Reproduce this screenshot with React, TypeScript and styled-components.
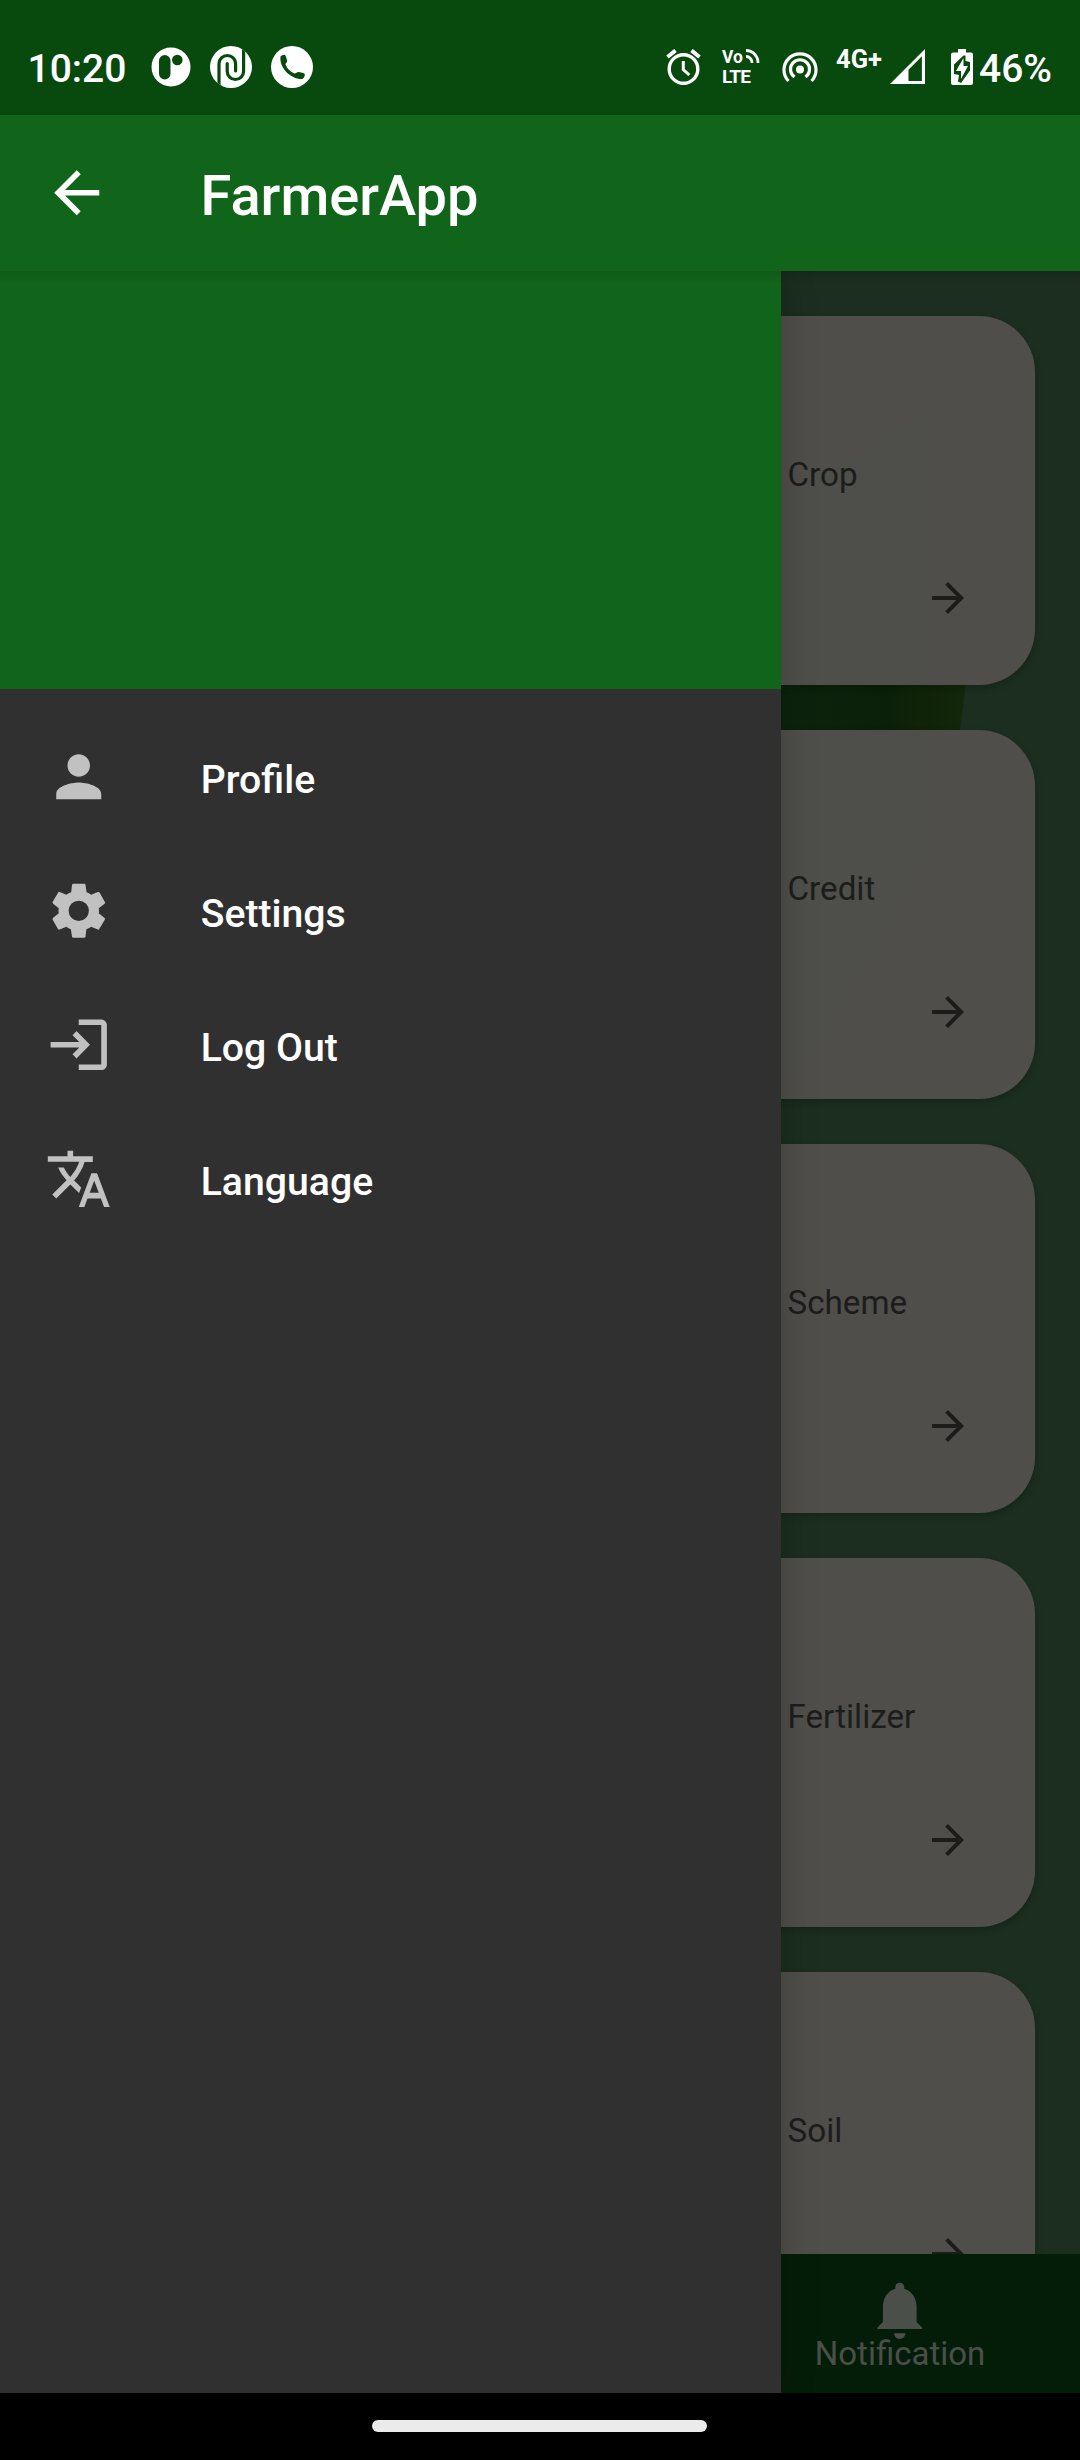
import React from 'react';
import styled, { createGlobalStyle } from 'styled-components';

const Global = createGlobalStyle`
  * { box-sizing: border-box; }
  body { margin: 0; background: #000; }
`;

const Screen = styled.div`
  width: 1080px;
  height: 2460px;
  display: flex;
  flex-direction: column;
  overflow: hidden;
  font-family: Roboto, 'Noto Sans', sans-serif;
  background: #000;
`;

const StatusBar = styled.header`
  height: 115px;
  flex: none;
  display: flex;
  align-items: center;
  padding: 18px 29px 0 27.5px;
  background: #08490e;
  color: #fff;
`;

const Clock = styled.span`
  width: 122px;
  font-size: 39px;
  font-weight: 500;
  line-height: 46px;
  padding-top: 4px;
`;

const Notifications = styled.div`
  display: flex;
  align-items: center;
  gap: 18.75px;
  flex: 1;
`;

const Glyph = styled.svg<{ $w: number; $h: number; $ml?: number }>`
  display: block;
  flex: none;
  width: ${(p) => p.$w}px;
  height: ${(p) => p.$h}px;
  margin-left: ${(p) => p.$ml ?? 0}px;
`;

const SystemIcons = styled.div`
  display: flex;
  align-items: center;
`;

const VoLte = styled.div`
  width: 42px;
  height: 38px;
  margin-left: 21px;
  display: flex;
  flex-direction: column;
`;

const VoRow = styled.div`
  display: flex;
  height: 19px;
  font-size: 17.5px;
  line-height: 18px;
  font-weight: 700;
`;

const LteRow = styled.span`
  font-size: 19px;
  line-height: 19px;
  font-weight: 700;
  letter-spacing: -0.8px;
`;

const Network = styled.span`
  align-self: flex-start;
  margin-left: 18px;
  margin-top: 2px;
  width: 49px;
  font-size: 25.5px;
  line-height: 30px;
  font-weight: 700;
  white-space: nowrap;
`;

const Battery = styled.span`
  width: 72px;
  margin-left: 6px;
  font-size: 39px;
  line-height: 46px;
  padding-top: 4px;
  font-weight: 500;
  white-space: nowrap;
`;

const AppBar = styled.div`
  height: 156px;
  flex: none;
  display: flex;
  align-items: center;
  padding-left: 42.5px;
  background: #11651a;
  color: #fff;
`;

const Title = styled.h1`
  margin: 6px 0 0 90.5px;
  font-size: 56px;
  line-height: 66px;
  font-weight: 500;
`;

const Body = styled.div`
  height: 2122px;
  flex: none;
  position: relative;
  overflow: hidden;
`;

const Home = styled.main`
  height: 100%;
  display: flex;
  flex-direction: column;
`;

const Feed = styled.div`
  height: 1983px;
  flex: none;
  position: relative;
  overflow: hidden;
  display: flex;
  flex-direction: column;
  gap: 45px;
  padding: 45px;
  background: #1b2e1f;
`;

const Backdrop = styled.svg`
  position: absolute;
  top: 0;
  left: 0;
  width: 1080px;
  height: 1983px;
`;

const Card = styled.article`
  position: relative;
  height: 369px;
  flex: none;
  border-radius: 56px;
  display: flex;
  flex-direction: column;
  background: rgba(83, 81, 79, 0.94);
  color: #1c1d1b;
  box-shadow: 0 3px 7px rgba(0, 0, 0, 0.2);
`;

const CardLabel = styled.div`
  padding: 139px 0 0 742.5px;
  font-size: 33.2px;
  line-height: 40px;
`;

const CardAction = styled.div`
  display: flex;
  justify-content: flex-end;
  padding: 79px 63px 0 0;
`;

const BottomNav = styled.nav`
  flex: 1;
  display: flex;
  justify-content: flex-end;
  background: #041d08;
  color: #4a4f49;
`;

const NavTab = styled.div`
  width: 360px;
  display: flex;
  flex-direction: column;
  align-items: center;
  padding-top: 23px;
`;

const NavLabel = styled.span`
  font-size: 33px;
  line-height: 40px;
  margin-top: -10.5px;
`;

const Drawer = styled.aside`
  position: absolute;
  inset: 0 auto 0 0;
  width: 781px;
  background: #303030;
  box-shadow: 0 0 34px rgba(0, 0, 0, 0.2);
`;

const DrawerHeader = styled.div`
  height: 418px;
  background: #11651a;
`;

const Menu = styled.ul`
  list-style: none;
  margin: 0;
  padding: 21px 0 0;
`;

const MenuItem = styled.li`
  height: 134px;
  display: flex;
  align-items: center;
  padding-left: 44.7px;
  color: #c1c1c1;
`;

const MenuLabel = styled.span`
  margin: 6px 0 0 88.5px;
  font-size: 39.2px;
  line-height: 46px;
  font-weight: 500;
  color: #fff;
`;

const BarShadow = styled.div`
  position: absolute;
  inset: 0 0 auto 0;
  height: 13px;
  background: linear-gradient(rgba(0, 0, 0, 0.11), rgba(0, 0, 0, 0));
`;

const GestureBar = styled.footer`
  flex: 1;
  display: flex;
  justify-content: center;
  padding: 27px 1px 0 0;
`;

const Pill = styled.div`
  width: 335px;
  height: 12px;
  border-radius: 6px;
  background: #ebebeb;
`;

const Material = ({ d, size = 67.5 }: { d: string; size?: number }) => (
  <Glyph $w={size} $h={size} viewBox="0 0 24 24" fill="currentColor">
    <path d={d} />
  </Glyph>
);

const ARROW_BACK = 'M20 11H7.83l5.59-5.59L12 4l-8 8 8 8 1.41-1.41L7.83 13H20v-2z';
const ARROW_FORWARD = 'M12 4l-1.41 1.41L16.17 11H4v2h12.17l-5.58 5.59L12 20l8-8z';
const BELL =
  'M12 22c1.1 0 2-.9 2-2h-4c0 1.1.9 2 2 2zm6-6v-5.500c0-3.070-1.930-5.640-4.400-6.320V3.600c0-.88-.72-1.600-1.600-1.600s-1.600.72-1.600 1.600v.58C7.930 4.860 6 7.430 6 10.500V16l-2 2v.5h16v-.5l-2-2z';

const MENU = [
  {
    label: 'Profile',
    d: 'M12 12c2.21 0 4-1.79 4-4s-1.79-4-4-4-4 1.79-4 4 1.79 4 4 4zm0 2c-2.67 0-8 1.34-8 4v2h16v-2c0-2.66-5.33-4-8-4z',
  },
  {
    label: 'Settings',
    d: 'M19.1 12.900a2.800 2.800 0 0 0 .1-.9 2.800 2.800 0 0 0-.1-.9l2.100-1.600a.7.7 0 0 0 .1-.6L19.400 5.500a.7.7 0 0 0-.6-.2l-2.400 1a6.500 6.500 0 0 0-1.600-.9l-.4-2.600a.5.5 0 0 0-.5-.4h-3.800a.5.5 0 0 0-.5.4l-.3 2.600a5.600 5.600 0 0 0-1.700.9l-2.400-1a.4.4 0 0 0-.5.2l-2 3.400c-.1.2 0 .4.2.6l2 1.600a2.800 2.800 0 0 0-.1.9 2.800 2.800 0 0 0 .1.9l-2 1.600a.7.7 0 0 0-.2.6l1.900 3.400a.7.7 0 0 0 .6.2l2.400-1a6.500 6.500 0 0 0 1.600.9l.4 2.600a.5.5 0 0 0 .5.4h3.800a.5.5 0 0 0 .5-.4l.3-2.600a5.600 5.600 0 0 0 1.700-.9l2.400 1a.4.4 0 0 0 .5-.2l2-3.400c.1-.2 0-.4-.2-.6zM12 15.600A3.600 3.600 0 1 1 15.600 12 3.600 3.600 0 0 1 12 15.600z',
  },
  {
    label: 'Log Out',
    d: 'M2 11h10.2L9.8 8.6 11.2 7.1 16 12l-4.8 4.9-1.4-1.5L12.2 13H2zM12 3h8c1.1 0 2 .9 2 2v14c0 1.100-.9 2-2 2h-8v-2h8V5h-8z',
  },
  {
    label: 'Language',
    d: 'M12.87 15.07l-2.54-2.51.03-.03c1.74-1.94 2.98-4.17 3.71-6.53H17V4h-7V2H8v2H1v1.99h11.17C11.5 7.92 10.44 9.75 9 11.35 8.07 10.32 7.3 9.19 6.69 8h-2c.73 1.63 1.73 3.17 2.98 4.56l-5.09 5.02L4 19l5-5 3.11 3.11.76-2.04zM18.5 10h-2L12 22h2l1.12-3h4.75L21 22h2l-4.5-12zm-2.62 7l1.62-4.33L19.12 17h-3.24z',
  },
];

const CARDS = ['Crop', 'Credit', 'Scheme', 'Fertilizer', 'Soil'];

const LeafBackdrop = () => (
  <Backdrop viewBox="0 0 1080 1983">
    <defs>
      <linearGradient id="leaf" x1="780" y1="0" x2="975" y2="0" gradientUnits="userSpaceOnUse">
        <stop offset="0" stopColor="#0c230d" />
        <stop offset="0.55" stopColor="#0b2008" />
        <stop offset="0.9" stopColor="#12260a" />
        <stop offset="1" stopColor="#15290e" />
      </linearGradient>
    </defs>
    <path
      fill="url(#leaf)"
      d="M967 115L860 180 700 260V820H785l40-51 35-65 30-45 35-75 20-55 15-70 7-55 5-60-2-130z"
    />
  </Backdrop>
);

const NotificationIcons = () => (
  <Notifications>
    <Glyph $w={42} $h={42} viewBox="0 0 42 42">
      <circle cx="21" cy="21" r="19.5" fill="#fff" />
      <rect x="9" y="9" width="11.500" height="24.500" rx="5.75" fill="#08490e" />
      <circle cx="27.300" cy="14" r="5.300" fill="#08490e" />
    </Glyph>
    <Glyph $w={42} $h={42} viewBox="0 0 42 42">
      <clipPath id="disc">
        <circle cx="21" cy="21" r="21" />
      </clipPath>
      <g clipPath="url(#disc)" fill="none" stroke="#08490e" strokeWidth="3.2" strokeLinecap="round">
        <rect width="42" height="42" fill="#fff" stroke="none" />
        <path d="M9 44V17.800a8.300 8.300 0 0 1 16.600 0V25" />
        <path d="M33.600 -2V25.300a8.200 8.200 0 0 1-16.400 0V17.500" />
      </g>
    </Glyph>
    <Glyph $w={42} $h={42} viewBox="0 0 42 42">
      <circle cx="21" cy="21" r="21" fill="#fff" />
      <path
        d="M9.500 10.500c1-1 2.500-1.700 4-1.700 1 0 1.500 1.700 2.700 6 .2 1.500-1.700 2.500-1.700 3.700 1.500 4 5 7.500 9 9 1.500.2 2.500-1.700 4-1.500 4 .8 6.300 1 6.300 2.500 0 2-1 4-2.500 4.500C20 33.500 8 22 9.500 10.500z"
        fill="#08490e"
      />
    </Glyph>
  </Notifications>
);

const StatusIcons = () => (
  <SystemIcons>
    <Glyph $w={35} $h={36} viewBox="0 0 35 36" fill="none" stroke="#fff">
      <circle cx="17.500" cy="20" r="14.300" strokeWidth="3.400" />
      <path d="M17.300 12v8.500l6 5.500" strokeWidth="3" />
      <path d="M1.500 8l8-6.500M33.500 8l-8-6.500" strokeWidth="4" />
    </Glyph>
    <VoLte>
      <VoRow>
        Vo
        <Glyph $w={15} $h={16} $ml={2} viewBox="0 0 15 16" fill="none" stroke="#fff" strokeWidth="2.800">
          <path d="M1 2.500a12 12 0 0 1 12 12.500M1 8.500a6 6 0 0 1 6 6.500" />
        </Glyph>
      </VoRow>
      <LteRow>LTE</LteRow>
    </VoLte>
    <Glyph $w={36} $h={32} $ml={18} viewBox="0 0 36 32" fill="none" stroke="#fff" strokeWidth="3.200">
      <circle cx="18" cy="18.500" r="4" fill="#fff" stroke="none" />
      <path d="M12.500 26a9.500 9.500 0 1 1 11 0" />
      <path d="M6.500 30a16 16 0 1 1 23 0" />
    </Glyph>
    <Network>4G+</Network>
    <Glyph $w={35} $h={35} $ml={5} viewBox="0 0 36 36">
      <path fill="#fff" fillRule="evenodd" d="M36 0v36H0zM32.800 7.500L19 21.300V32.800h13.800z" />
    </Glyph>
    <Glyph $w={22} $h={36} $ml={26} viewBox="0 0 22 36">
      <path fill="#fff" d="M7 0h8v3.500h5a2 2 0 0 1 2 2V34a2 2 0 0 1-2 2H2a2 2 0 0 1-2-2V5.500a2 2 0 0 1 2-2h5z" />
      <path fill="#08490e" d="M12.500 6.500L3 15.500V25l5 1-1 6.500 3 1.500 9-12.500V13l-4.500-1V6.500z" />
      <path fill="#fff" d="M12.500 9L5 22h5v8l7-13h-4.500z" />
    </Glyph>
    <Battery>46%</Battery>
  </SystemIcons>
);

export default function App() {
  return (
    <Screen>
      <Global />
      <StatusBar>
        <Clock>10:20</Clock>
        <NotificationIcons />
        <StatusIcons />
      </StatusBar>
      <AppBar>
        <Material d={ARROW_BACK} />
        <Title>FarmerApp</Title>
      </AppBar>
      <Body>
        <Home>
          <Feed>
            <LeafBackdrop />
            {CARDS.map((name) => (
              <Card key={name}>
                <CardLabel>{name}</CardLabel>
                <CardAction>
                  <Material d={ARROW_FORWARD} size={48} />
                </CardAction>
              </Card>
            ))}
          </Feed>
          <BottomNav>
            <NavTab>
              <Material d={BELL} />
              <NavLabel>Notification</NavLabel>
            </NavTab>
          </BottomNav>
        </Home>
        <Drawer>
          <DrawerHeader />
          <Menu>
            {MENU.map((item) => (
              <MenuItem key={item.label}>
                <Material d={item.d} />
                <MenuLabel>{item.label}</MenuLabel>
              </MenuItem>
            ))}
          </Menu>
        </Drawer>
        <BarShadow />
      </Body>
      <GestureBar>
        <Pill />
      </GestureBar>
    </Screen>
  );
}
